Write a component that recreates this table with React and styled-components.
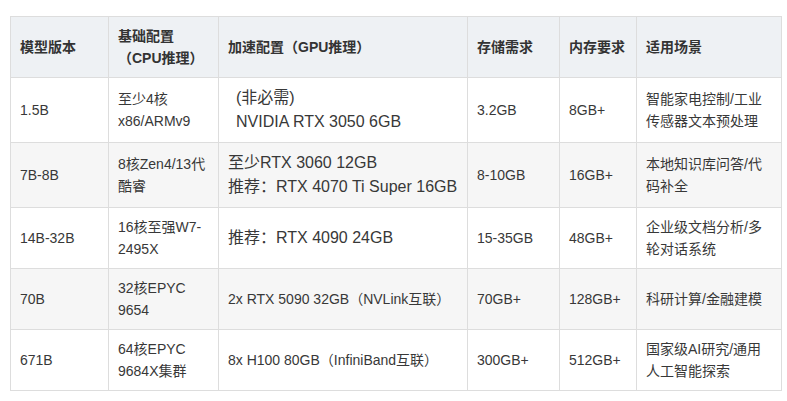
import React from 'react';
import styled, { createGlobalStyle } from 'styled-components';

const GlobalStyle = createGlobalStyle`
    body {
        margin: 0;
        background: #ffffff;
        font-family: "Liberation Sans", Arial, "Noto Sans CJK SC", sans-serif;
        color: #333333;
    }
`

const Page = styled.div`
    padding: 16px 0 0 10px;
`

const Table = styled.table`
    width: 771px;
    table-layout: fixed;
    border-collapse: collapse;
    border: 1px solid #dddddd;
    font-size: 14px;
    line-height: 22px;
`

const HeadCell = styled.th`
    background-color: #eef1f4;
    border: 1px solid #dddddd;
    padding: 8px 9px;
    text-align: left;
    vertical-align: middle;
    font-weight: bold;
    color: #333333;
`

const Row = styled.tr`
    background-color: ${p => (p.$striped ? '#f6f6f6' : '#ffffff')};
`

const Cell = styled.td`
    border: 1px solid #dddddd;
    padding: 8px 9px 8px ${p => (p.$indent ? '17px' : '9px')};
    vertical-align: middle;
    font-size: ${p => (p.$large ? '16px' : '14px')};
    line-height: ${p => (p.$large ? '24px' : '22px')};
    color: #383838;
`

const widths = [98, 110, 249, 92, 77, 145];

const rows = [
    {
        model: '1.5B',
        cpu: '至少4核x86/ARMv9',
        gpu: ['(非必需)', 'NVIDIA RTX 3050 6GB'],
        large: true,
        indent: true,
        disk: '3.2GB',
        mem: '8GB+',
        use: '智能家电控制/工业传感器文本预处理',
    },
    {
        model: '7B-8B',
        cpu: '8核Zen4/13代酷睿',
        gpu: ['至少RTX 3060 12GB', '推荐：RTX 4070 Ti Super 16GB'],
        large: true,
        disk: '8-10GB',
        mem: '16GB+',
        use: '本地知识库问答/代码补全',
    },
    {
        model: '14B-32B',
        cpu: '16核至强W7-2495X',
        gpu: ['推荐：RTX 4090 24GB'],
        large: true,
        disk: '15-35GB',
        mem: '48GB+',
        use: '企业级文档分析/多轮对话系统',
    },
    {
        model: '70B',
        cpu: '32核EPYC 9654',
        gpu: ['2x RTX 5090 32GB（NVLink互联）'],
        disk: '70GB+',
        mem: '128GB+',
        use: '科研计算/金融建模',
    },
    {
        model: '671B',
        cpu: '64核EPYC 9684X集群',
        gpu: ['8x H100 80GB（InfiniBand互联）'],
        disk: '300GB+',
        mem: '512GB+',
        use: '国家级AI研究/通用人工智能探索',
    },
];

const Lines = ({ items }) =>
    items.map((line, i) => (
        <React.Fragment key={i}>
            {i > 0 && <br />}
            {line}
        </React.Fragment>
    ));

export default function App() {
    return (
        <Page>
            <GlobalStyle />
            <Table>
                <colgroup>
                    {widths.map((w, i) => <col key={i} style={{ width: w }} />)}
                </colgroup>
                <thead>
                    <tr>
                        <HeadCell>模型版本</HeadCell>
                        <HeadCell>基础配置（CPU推理）</HeadCell>
                        <HeadCell>加速配置（GPU推理）</HeadCell>
                        <HeadCell>存储需求</HeadCell>
                        <HeadCell>内存要求</HeadCell>
                        <HeadCell>适用场景</HeadCell>
                    </tr>
                </thead>
                <tbody>
                    {rows.map((r, i) => (
                        <Row key={r.model} $striped={i % 2 === 1}>
                            <Cell>{r.model}</Cell>
                            <Cell>{r.cpu}</Cell>
                            <Cell $large={r.large} $indent={r.indent}>
                                <Lines items={r.gpu} />
                            </Cell>
                            <Cell>{r.disk}</Cell>
                            <Cell>{r.mem}</Cell>
                            <Cell>{r.use}</Cell>
                        </Row>
                    ))}
                </tbody>
            </Table>
        </Page>
    );
}
